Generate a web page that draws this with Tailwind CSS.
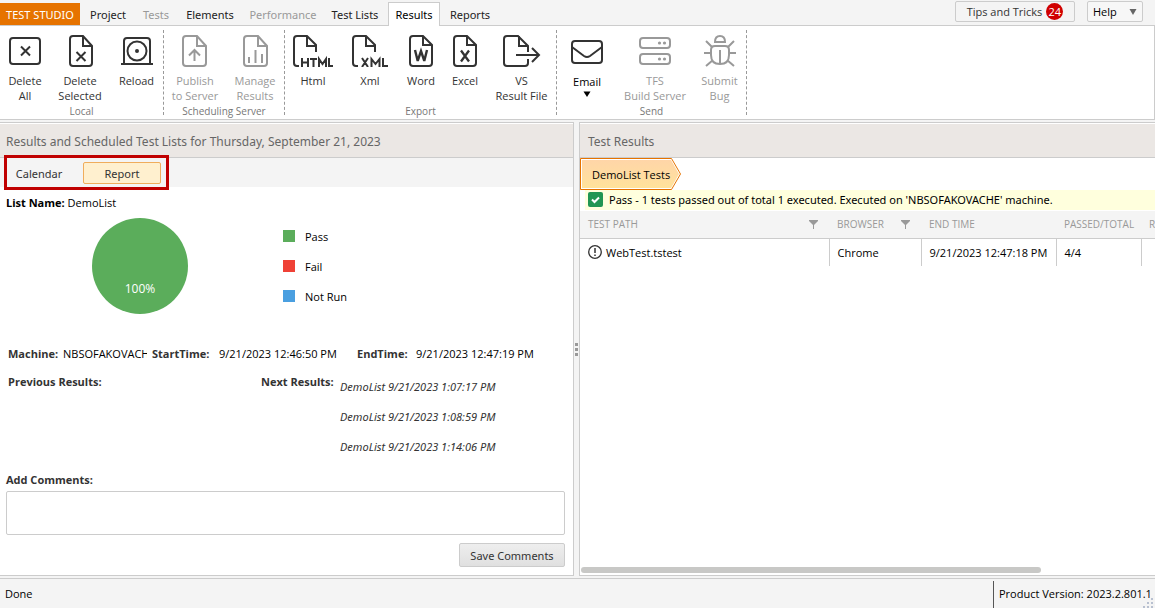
<!DOCTYPE html>
<html lang="en">
<head>
<meta charset="utf-8">
<title>Test Studio - Results</title>
<script src="https://cdn.jsdelivr.net/npm/@tailwindcss/browser@4"></script>
</head>
<body class="flex h-screen flex-col overflow-hidden bg-[#f4f4f4] font-['Open_Sans','Noto_Sans',sans-serif] text-[11px] leading-[15px] text-black">

<header class="flex h-[26px] shrink-0 border-b border-[#cccccc] text-[#222222]">
  <nav class="flex items-stretch pt-[3px] font-['Noto_Sans',sans-serif]" aria-label="Main">
    <button class="w-20 bg-[#e67300] text-white">TEST STUDIO</button>
    <button class="w-14">Project</button>
    <button class="w-10 text-[#999999]" disabled>Tests</button>
    <button class="w-[68px]">Elements</button>
    <button class="w-[78px] text-[#999999]" disabled>Performance</button>
    <button class="w-[66px]">Test Lists</button>
    <button class="-mt-px -mb-px w-[52px] border border-b-0 border-[#cccccc] bg-white text-black">Results</button>
    <button class="w-[60px]">Reports</button>
  </nav>
  <div class="ml-auto flex h-[22px] gap-3 pr-3 pt-px">
    <button class="flex h-[21px] w-[120px] items-center justify-center gap-1 rounded-xs border border-[#cccccc] text-[#333333]">Tips and Tricks <span class="flex size-[17px] items-center justify-center rounded-full bg-[#d00000] text-white">24</span></button>
    <button class="flex h-[21px] w-14 items-center justify-between rounded-xs border border-[#cccccc] bg-[#f7f7f7] px-[5px] text-black">Help <svg width="8" height="6" viewBox="0 0 8 6" fill="#666"><path d="M0.500 0h7L4 6z"/></svg></button>
  </div>
</header>

<section class="flex h-[94px] shrink-0 border-b border-r border-[#cccccc] bg-white text-[#333333]" aria-label="Ribbon">
  <div class="flex flex-col pt-[9px]">
    <div class="flex h-[69px]">
      <button class="flex w-[50px] flex-col items-center"><svg class="mb-[6px]" width="32" height="32" viewBox="0 0 32 32" fill="none" stroke="currentColor" stroke-width="2"><rect x="1" y="3" width="30" height="26" rx="3"/><path d="M12 11.500l9 9m0-9l-9 9"/></svg>Delete<br>All</button>
      <button class="flex w-[60px] flex-col items-center"><svg class="mb-[6px]" width="32" height="32" viewBox="0 0 32 32" fill="none" stroke="currentColor" stroke-width="2"><path d="M19 1H9Q6 1 6 4v24q0 3 3 3h16q3 0 3-3V11L19 1v10h9"/><path d="M12.500 17l9 9m0-9l-9 9"/></svg>Delete<br>Selected</button>
      <button class="flex w-[53px] flex-col items-center"><svg class="mb-[6px]" width="32" height="32" viewBox="0 0 32 32" fill="none" stroke="currentColor" stroke-width="2"><path d="M0 29h32M3 29V6q0-3 3-3h20q3 0 3 3v23"/><circle cx="16" cy="16" r="9.500"/><circle cx="16" cy="16" r="1" fill="currentColor"/></svg>Reload</button>
    </div>
    <div class="text-center text-[10px] text-[#777777]">Local</div>
  </div>
  <div class="my-1 border-l border-dashed border-[#999999]"></div>
  <div class="flex flex-col pt-[9px]">
    <div class="flex h-[69px] text-[#999999]">
      <button class="flex w-[62px] flex-col items-center" disabled><svg class="mb-[6px]" width="32" height="32" viewBox="0 0 32 32" fill="none" stroke="currentColor" stroke-width="2"><path d="M18 1H7Q4 1 4 4v24q0 3 3 3h17q3 0 3-3V11L18 1v10h9"/><path d="M15.500 26V15M10 20.500l5.500-5.500 5.500 5.500"/></svg>Publish<br>to Server</button>
      <button class="flex w-[58px] flex-col items-center" disabled><svg class="mb-[6px]" width="32" height="32" viewBox="0 0 32 32" fill="none" stroke="currentColor" stroke-width="2"><path d="M19 1H8Q5 1 5 4v24q0 3 3 3h17q3 0 3-3V11L19 1v10h9"/><path d="M10 28v-6M16.500 28V15M23 28v-9"/></svg>Manage<br>Results</button>
    </div>
    <div class="text-center text-[10px] text-[#777777]">Scheduling Server</div>
  </div>
  <div class="my-1 border-l border-dashed border-[#999999]"></div>
  <div class="flex flex-col pt-[9px]">
    <div class="flex h-[69px]">
      <button class="flex w-[56px] flex-col items-center"><svg class="mb-[6px]" width="40" height="32" viewBox="0 0 40 32" fill="none" stroke="currentColor" stroke-width="2"><path d="M6 31H4q-3 0-3-3V4q0-3 3-3h10l9 9v7M14 1v10h9"/><path d="M9 23v9M15 23v9M9 27.500h6M17 24h7M20.500 23v9M26 32v-8l3.500 5 3.500-5v8M36 23v8h4"/></svg>Html</button>
      <button class="flex w-[58px] flex-col items-center"><svg class="mb-[6px]" width="36" height="32" viewBox="0 0 36 32" fill="none" stroke="currentColor" stroke-width="2"><path d="M6 31H4q-3 0-3-3V4q0-3 3-3h10l9 9v7M14 1v10h9"/><path d="M10 23l6 9M16 23l-6 9M19.500 32v-8l4 5 4-5v8M31 23v8h5"/></svg>Xml</button>
      <button class="flex w-[44px] flex-col items-center"><svg class="mb-[6px]" width="24" height="32" viewBox="0 0 24 32" fill="none" stroke="currentColor" stroke-width="2"><path d="M13 1H4Q1 1 1 4v24q0 3 3 3h16q3 0 3-3V10L14 1v9h9"/><path d="M6 15l2.500 10h.5L12 16l3 9h.5L18 15" stroke-width="2.400"/></svg>Word</button>
      <button class="flex w-[44px] flex-col items-center"><svg class="mb-[6px]" width="24" height="32" viewBox="0 0 24 32" fill="none" stroke="currentColor" stroke-width="2"><path d="M13 1H4Q1 1 1 4v24q0 3 3 3h16q3 0 3-3V10L14 1v9h9"/><path d="M8 15.500l8 11M16 15.500l-8 11" stroke-width="2.300"/></svg>Excel</button>
      <button class="flex w-[69px] flex-col items-center"><svg class="mb-[6px]" width="38" height="32" viewBox="0 0 38 32" fill="none" stroke="currentColor" stroke-width="2"><path d="M25 17v-6L15 1H4Q1 1 1 4v24q0 3 3 3h18q3 0 3-3v-4M16 1v10h9M13 20h23M29 13l7 7-7 7"/></svg>VS<br>Result File</button>
    </div>
    <div class="text-center text-[10px] text-[#777777]">Export</div>
  </div>
  <div class="my-1 border-l border-dashed border-[#999999]"></div>
  <div class="flex flex-col pt-[9px]">
    <div class="flex h-[69px]">
      <button class="flex w-[60px] flex-col items-center text-black"><svg class="mb-[7px] text-[#333333]" width="32" height="32" viewBox="0 0 32 32" fill="none" stroke="currentColor" stroke-width="2"><rect x="1" y="6" width="30" height="22" rx="3"/><path d="M1 12l12 9q3 2 6 0l12-9"/></svg>Email<svg class="mt-[2px]" width="8" height="6" viewBox="0 0 8 6" fill="currentColor"><path d="M0.500 0.500h7L4 6z"/></svg></button>
      <button class="flex w-[76px] flex-col items-center text-[#999999]" disabled><svg class="mb-[6px]" width="32" height="32" viewBox="0 0 32 32" fill="none" stroke="currentColor" stroke-width="2"><rect x="1" y="3" width="30" height="10" rx="3"/><rect x="1" y="19" width="30" height="10" rx="3"/><g fill="currentColor" stroke="none"><circle cx="20.500" cy="8" r="1.600"/><circle cx="25.500" cy="8" r="1.600"/><circle cx="20.500" cy="24" r="1.600"/><circle cx="25.500" cy="24" r="1.600"/></g></svg>TFS<br>Build Server</button>
      <button class="flex w-[53px] flex-col items-center text-[#999999]" disabled><svg class="mb-[6px]" width="32" height="32" viewBox="0 0 32 32" fill="none" stroke="currentColor" stroke-width="2"><path d="M11 7q0-6 5-6t5 6z"/><path d="M11 11h10q4 0 4 4v5q0 9-9 9t-9-9v-5q0-4 4-4zM16 15v14M0 18h7M25 18h7M2 6l6 6M30 6l-6 6M2 31l7-6M30 31l-7-6"/></svg>Submit<br>Bug</button>
    </div>
    <div class="text-center text-[10px] text-[#777777]">Send</div>
  </div>
  <div class="my-1 border-l border-dashed border-[#999999]"></div>
</section>

<main class="flex min-h-0 flex-1 py-[2px]">
  <section class="flex w-[574px] shrink-0 flex-col border-y border-r border-[#cccccc] bg-white">
    <h2 class="mt-px flex h-[34px] shrink-0 items-center border-b border-[#cccccc] bg-[#ebe7e4] px-[6px] pt-px font-['Noto_Sans',sans-serif] text-[12px] text-[#666666]">Results and Scheduled Test Lists for Thursday, September 21, 2023</h2>
    <div class="relative flex h-[29px] shrink-0 items-center bg-[#f4f4f4] pt-px pl-2 font-['Noto_Sans',sans-serif] text-[#333333]">
      <button class="w-[62px]">Calendar</button>
      <button class="ml-[13px] h-[22px] w-[78px] rounded-xs border border-[#f0ad5c] bg-[#fff0cf]">Report</button>
      <div class="pointer-events-none absolute -top-[3px] left-1 h-[35px] w-[165px] border-3 border-[#c00000]"></div>
    </div>
    <p class="px-[6px] pt-2"><b>List Name:</b> DemoList</p>
    <div class="mt-2 flex h-24 items-center pl-[92px]">
      <div class="flex size-24 items-end justify-center rounded-full bg-[#5bad5b] pb-[18px] text-[12px] text-white">100%</div>
      <ul class="ml-[95px] flex flex-col gap-[15px]">
        <li class="flex items-center gap-[10px]"><span class="size-3 bg-[#5bad5b]"></span>Pass</li>
        <li class="flex items-center gap-[10px]"><span class="size-3 bg-[#ef4136]"></span>Fail</li>
        <li class="flex items-center gap-[10px]"><span class="size-3 bg-[#4a9fe0]"></span>Not Run</li>
      </ul>
    </div>
    <div class="mt-8 grid grid-cols-[55px_89px_67px_138px_59px_1fr] pl-2 whitespace-nowrap">
      <b class="text-[#333333]">Machine:</b><span class="mr-[5px] overflow-hidden">NBSOFAKOVACHE</span>
      <b class="text-[#333333]">StartTime:</b><span>9/21/2023 12:46:50 PM</span>
      <b class="text-[#333333]">EndTime:</b><span>9/21/2023 12:47:19 PM</span>
    </div>
    <div class="mt-[13px] grid grid-cols-[253px_79px_1fr] pl-2 text-[#333333]">
      <b>Previous Results:</b><b>Next Results:</b>
      <ul class="flex flex-col gap-[15px] pt-[5px] font-['Noto_Sans',sans-serif] italic"><li>DemoList 9/21/2023 1:07:17 PM</li><li>DemoList 9/21/2023 1:08:59 PM</li><li>DemoList 9/21/2023 1:14:06 PM</li></ul>
    </div>
    <label for="comments" class="mt-[18px] px-[6px] font-bold text-[#333333]">Add Comments:</label>
    <textarea id="comments" class="mr-2 ml-[6px] mt-1 h-11 shrink-0 resize-none rounded-xs border border-[#cccccc] bg-white"></textarea>
    <button class="mr-2 mt-2 h-6 w-[106px] shrink-0 self-end rounded-xs border border-[#cccccc] bg-linear-to-b from-[#eeeeee] to-[#e0e0e0] font-['Noto_Sans',sans-serif] text-[#333333]">Save Comments</button>
  </section>

  <div class="flex w-[5px] shrink-0 cursor-col-resize flex-col items-center justify-center gap-[2px]"><span class="size-[3px] bg-[#999999]"></span><span class="size-[3px] bg-[#999999]"></span><span class="size-[3px] bg-[#999999]"></span></div>

  <section class="flex min-w-0 flex-1 flex-col border-y border-l border-[#cccccc] bg-white">
    <h2 class="mt-px flex h-[34px] shrink-0 items-center border-b border-[#cccccc] bg-[#ebe7e4] px-2 pt-px font-['Noto_Sans',sans-serif] text-[12px] text-[#666666]">Test Results</h2>
    <a href="#" class="relative flex h-8 w-[101px] shrink-0 items-center pl-3">
      <svg class="absolute inset-0" width="101" height="32" viewBox="0 0 101 32"><defs><linearGradient id="crumb" x2="0" y2="1"><stop stop-color="#ffd5a8"/><stop offset="1" stop-color="#ffe29b"/></linearGradient></defs><path d="M0.500 0.500H91.500L100.500 16 91.500 31.500H0.500z" fill="#fff" stroke="#e67300"/><path d="M2 2H91L99 16 91 30H2z" fill="url(#crumb)"/></svg>
      <span class="relative whitespace-nowrap">DemoList Tests</span>
    </a>
    <p class="ml-[5px] flex h-5 shrink-0 items-center gap-[6px] bg-[#ffffdd] pb-px pl-[3px] font-['Noto_Sans',sans-serif] whitespace-nowrap"><svg width="15" height="15" viewBox="0 0 15 15"><rect width="15" height="15" rx="2" fill="#219653"/><path d="M4 7.500l2.500 2.500L11 5.500" fill="none" stroke="#fff" stroke-width="2"/></svg>Pass - 1 tests passed out of total 1 executed. Executed on 'NBSOFAKOVACHE' machine.</p>
    <div class="mt-px min-h-0 flex-1 overflow-hidden">
      <table class="w-[700px] table-fixed border-collapse text-left whitespace-nowrap">
        <colgroup><col class="w-[249px]"><col class="w-[92px]"><col class="w-[135px]"><col class="w-[85px]"><col></colgroup>
        <thead><tr class="h-[27px] border-b border-[#cccccc] bg-[#f4f4f4] text-[10px] text-[#999999]">
          <th class="px-2 font-normal"><div class="flex items-center justify-between pr-[3px]">TEST PATH<svg width="9" height="9" viewBox="0 0 9 9" fill="#999"><path d="M0 0h9v1L5 5v4H4V5L0 1z"/></svg></div></th>
          <th class="px-2 font-normal"><div class="flex items-center justify-between pr-[3px]">BROWSER<svg width="9" height="9" viewBox="0 0 9 9" fill="#999"><path d="M0 0h9v1L5 5v4H4V5L0 1z"/></svg></div></th>
          <th class="px-2 font-normal">END TIME</th><th class="px-2 font-normal">PASSED/TOTAL</th><th class="px-2 font-normal">RESULT</th>
        </tr></thead>
        <tbody><tr class="h-7">
          <td class="border-r border-[#cccccc] px-2"><div class="flex items-center gap-1"><svg width="14" height="14" viewBox="0 0 14 14" fill="none" stroke="#333"><circle cx="7" cy="7" r="6.300" stroke-width="1.300"/><path d="M7 3v5M7 9.500V11" stroke-width="1.500"/></svg>WebTest.tstest</div></td>
          <td class="border-r border-[#cccccc] px-2">Chrome</td><td class="border-r border-[#cccccc] px-2">9/21/2023 12:47:18 PM</td><td class="border-r border-[#cccccc] px-2">4/4</td><td></td>
        </tr></tbody>
      </table>
    </div>
    <div class="mb-[2px] ml-px h-[6px] w-4/5 shrink-0 rounded-full bg-[#c8c8c6]"></div>
  </section>
</main>

<footer class="flex h-[30px] shrink-0 items-stretch justify-between border-t border-[#cccccc]">
  <span class="flex items-center pl-[5px]">Done</span>
  <span class="relative mt-[2px] flex w-[162px] items-center border-l border-[#555555] pb-[2px] pl-[5px] whitespace-nowrap">Product Version: 2023.2.801.1
    <svg class="absolute right-[2px] bottom-0" width="11" height="11" viewBox="0 0 11 11" fill="#b8c0d0"><path d="M9 1h2v2H9zM9 5h2v2H9zM9 9h2v2H9zM5 5h2v2H5zM5 9h2v2H5zM1 9h2v2H1z"/></svg></span>
</footer>
</body>
</html>
